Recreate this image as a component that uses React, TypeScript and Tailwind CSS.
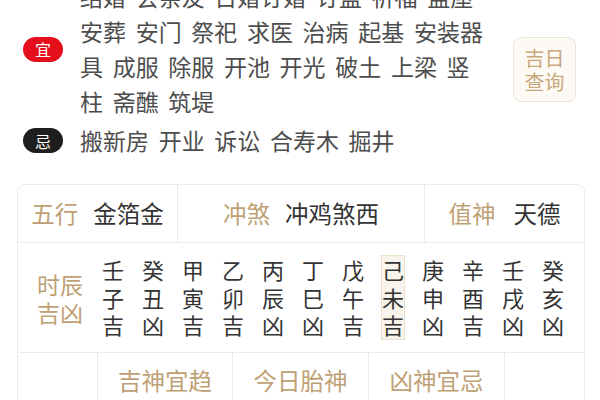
import React from "react";

const yiLines = [
  "结婚 会亲友 日婚订婚 订盟 祈福 盖屋",
  "安葬 安门 祭祀 求医 治病 起基 安装器",
  "具 成服 除服 开池 开光 破土 上梁 竖",
  "柱 斋醮 筑堤",
];

const hours = [
  ["壬", "子", "吉"],
  ["癸", "丑", "凶"],
  ["甲", "寅", "吉"],
  ["乙", "卯", "吉"],
  ["丙", "辰", "凶"],
  ["丁", "巳", "凶"],
  ["戊", "午", "吉"],
  ["己", "未", "吉"],
  ["庚", "申", "凶"],
  ["辛", "酉", "吉"],
  ["壬", "戌", "凶"],
  ["癸", "亥", "凶"],
];

const CURRENT = 7;

function Pill({ text, dark }: { text: string; dark?: boolean }) {
  return (
    <div
      className={
        "w-[40px] h-[25px] rounded-full flex items-center justify-center text-[16px] leading-[20px] text-white shrink-0 " +
        (dark ? "bg-[#1e1e1e]" : "bg-[#e50f1c]")
      }
    >
      {text}
    </div>
  );
}

export default function App() {
  return (
    <div
      className="w-[600px] h-[400px] overflow-hidden bg-white"
      style={{ fontFamily: '"Noto Sans CJK SC", "Noto Sans", sans-serif' }}
    >
      {/* 宜 */}
      <div className="flex items-start mt-[-21px] pl-[23px]">
        <div className="flex items-center h-[140px]">
          <Pill text="宜" />
        </div>
        <div className="ml-[17px] w-[433px] text-[23px] leading-[35px] text-[#4d4d4d] [word-spacing:4.5px]">
          {yiLines.map((l) => (
            <div key={l} className="whitespace-nowrap">
              {l}
            </div>
          ))}
        </div>
        <div className="mt-[58px] w-[63px] h-[65px] rounded-[8px] border border-[#ece4d4] bg-[#fdfaf5] flex flex-col items-center justify-center text-[20px] leading-[24px] text-[#c8a87c]">
          <span>吉日</span>
          <span>查询</span>
        </div>
      </div>

      {/* 忌 */}
      <div className="flex items-center mt-[4px] pl-[23px]">
        <Pill text="忌" dark />
        <div className="ml-[17px] text-[23px] leading-[35px] text-[#4d4d4d] whitespace-nowrap [word-spacing:4.5px]">
          搬新房 开业 诉讼 合寿木 掘井
        </div>
      </div>

      {/* table */}
      <div className="mt-[26px] ml-[17px] w-[568px] border border-[#ebebeb] rounded-t-[8px] text-[23.5px]">
        <div className="flex h-[58px] border-b border-[#ebebeb]">
          <div className="w-[160px] flex items-center justify-center gap-[15px] border-r border-[#ebebeb]">
            <span className="text-[#bf9f74]">五行</span>
            <span className="text-[#333]">金箔金</span>
          </div>
          <div className="w-[247px] flex items-center justify-center gap-[15px] border-r border-[#ebebeb]">
            <span className="text-[#bf9f74]">冲煞</span>
            <span className="text-[#333]">冲鸡煞西</span>
          </div>
          <div className="flex-1 flex items-center justify-center gap-[18px]">
            <span className="text-[#bf9f74]">值神</span>
            <span className="text-[#333]">天德</span>
          </div>
        </div>

        <div className="flex items-center h-[110px] border-b border-[#ebebeb] pl-[19px]">
          <div className="w-[48px] flex flex-col text-[23px] leading-[28px] text-[#bf9f74]">
            <span>时辰</span>
            <span>吉凶</span>
          </div>
          <div className="flex ml-[8px]">
            {hours.map((h, i) => (
              <div key={i} className="w-[40px] flex justify-center">
                <div
                  className={
                    "w-[24px] flex flex-col items-center text-[22px] leading-[27.5px] text-[#333] " +
                    (i === CURRENT ? "bg-[#f8f4ec] border border-[#e9dfcb]" : "border border-transparent")
                  }
                >
                  {h.map((c, j) => (
                    <span key={j}>{c}</span>
                  ))}
                </div>
              </div>
            ))}
          </div>
        </div>

        <div className="flex h-[56px] text-[#bf9f74]">
          <div className="w-[80px] border-r border-[#ebebeb]" />
          <div className="w-[135px] flex items-center justify-center border-r border-[#ebebeb]">吉神宜趋</div>
          <div className="w-[136px] flex items-center justify-center border-r border-[#ebebeb]">今日胎神</div>
          <div className="w-[136px] flex items-center justify-center border-r border-[#ebebeb]">凶神宜忌</div>
          <div className="flex-1" />
        </div>
      </div>
    </div>
  );
}
